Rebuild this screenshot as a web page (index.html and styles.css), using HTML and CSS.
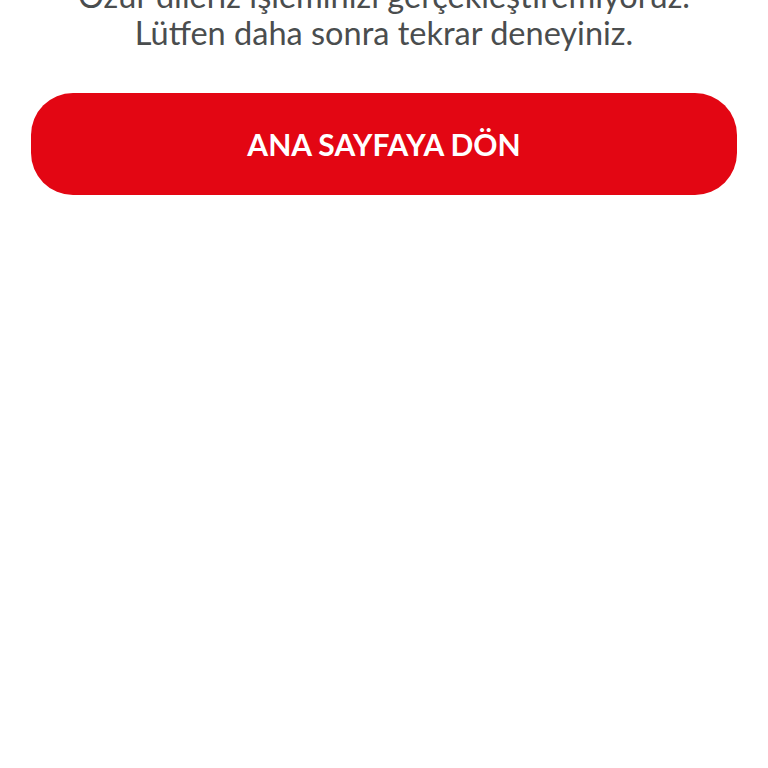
FILE: index.html
```html
<!DOCTYPE html>
<html lang="tr">
<head>
    <meta charset="UTF-8">
    <meta name="viewport" content="width=device-width, initial-scale=1.0">
    <title>Hata</title>
    <link rel="stylesheet" href="styles.css">
</head>
<body>
    <div class="page">
        <p class="message">Özür dileriz işleminizi gerçekleştiremiyoruz.<br>Lütfen daha sonra tekrar deneyiniz.</p>
        <button class="home_button">ANA SAYFAYA DÖN</button>
    </div>
</body>
</html>
```

FILE: styles.css
```css
body {
    margin: 0;
    background-color: #fff;
    font-family: "Lato", "Liberation Sans", sans-serif;
}
.page {
    padding: 0 31px;
}
.message {
    margin: -23px 0 0;
    color: #4a4d4e;
    font-size: 32.5px;
    line-height: 37px;
    text-align: center;
}
.home_button {
    display: block;
    width: 100%;
    height: 102px;
    margin-top: 42px;
    border: none;
    border-radius: 42px;
    background-color: #e30613;
    color: #fff;
    font-family: "Lato", "Liberation Sans", sans-serif;
    font-size: 30px;
    font-weight: 700;
    cursor: pointer;
}
```
